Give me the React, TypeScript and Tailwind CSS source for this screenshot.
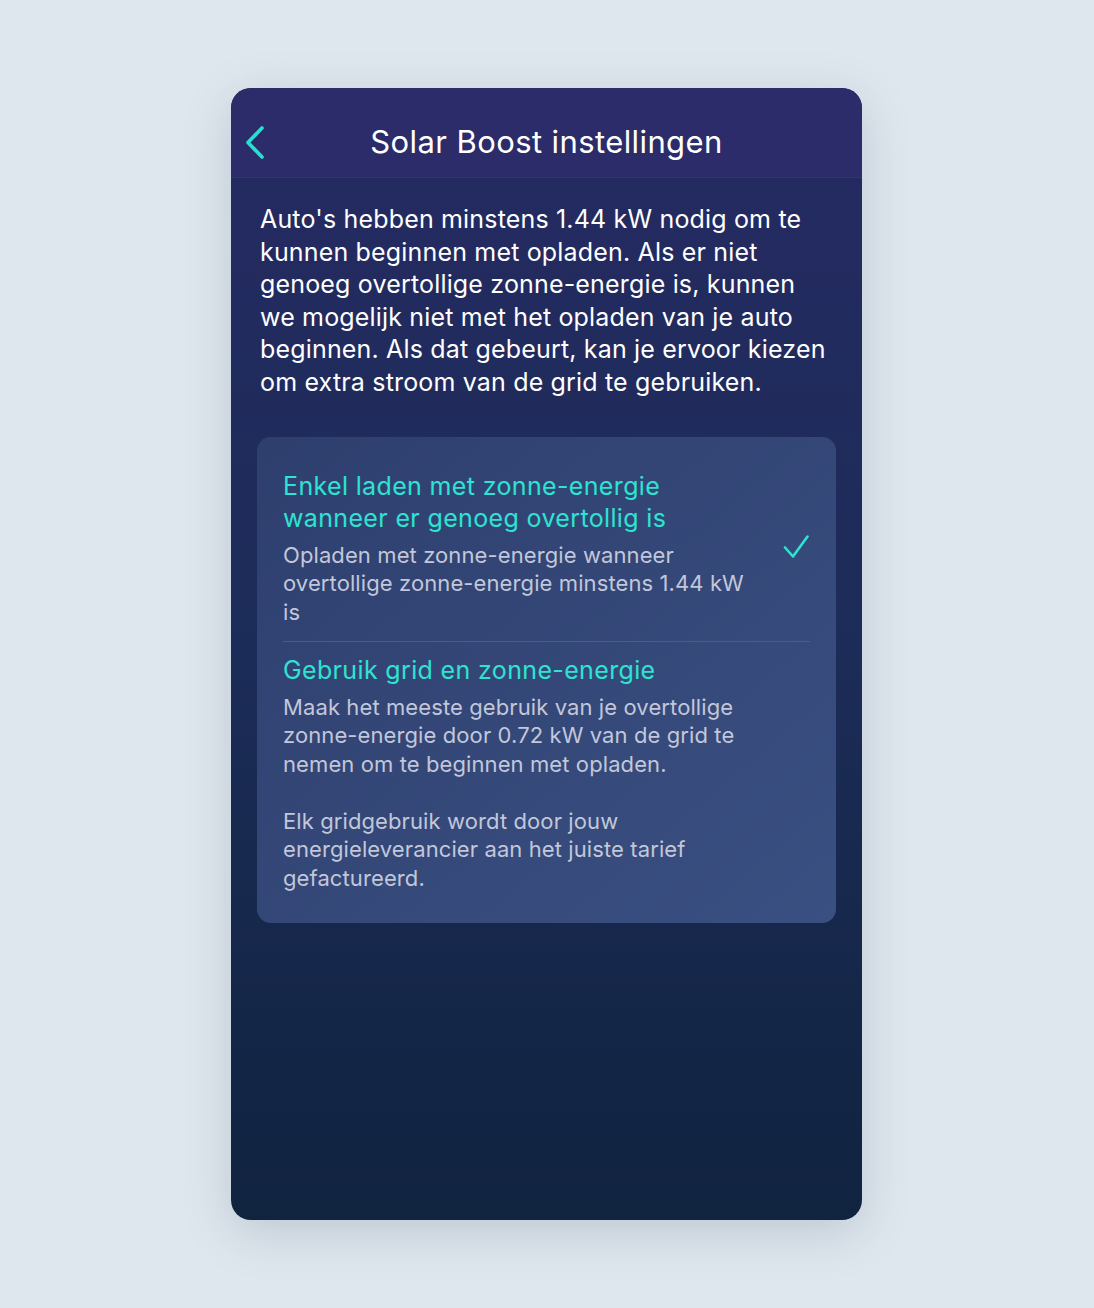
import React from 'react';

// Option row inside the settings card
interface OptionProps {
  title: React.ReactNode;
  selected?: boolean;
  children: React.ReactNode;
}

const Option = ({ title, selected, children }: OptionProps) => (
  <div className="flex items-center">
    <div className="w-[490px]">
      <p className="text-[25px] leading-[32.5px] text-[#2ee3d2] tracking-[0.35px]">{title}</p>
      <div className="mt-[6px] text-[22px] leading-[28.5px] text-[#c2c7da] tracking-[0.1px]">{children}</div>
    </div>
    {selected && (
      <svg className="ml-auto mr-[-2px] mt-[4px] h-[30px] w-[30px]" viewBox="0 0 30 30" fill="none">
        <path
          d="M3 12.5 L11 21.5 L25.5 1.5"
          stroke="#2ee3d2"
          strokeWidth="2.6"
          strokeLinecap="round"
          strokeLinejoin="round"
        />
      </svg>
    )}
  </div>
);

export default function App() {
  return (
    <div
      className="min-h-[1308px] bg-[#dfe7ee] pt-[88px]"
      style={{ fontFamily: 'Inter, "Noto Sans", sans-serif' }}
    >
      <div className="ml-[231px] flex h-[1132px] w-[631px] flex-col overflow-hidden rounded-[20px] bg-gradient-to-b from-[#252a62] via-[#1c2c58] to-[#10233f] shadow-[0_12px_50px_rgba(40,60,90,0.18)]">
        {/* Header */}
        <div className="grid h-[90px] shrink-0 grid-cols-[60px_1fr_60px] items-center border-b border-[#313378] bg-[#2b2c69] pt-[18px]">
          <button className="flex h-full items-center pl-[14px]">
            <svg width="22" height="34" viewBox="0 0 22 34" fill="none">
              <path
                d="M17 3 L3 17.5 L17 32"
                stroke="#22e3d3"
                strokeWidth="3.6"
                strokeLinecap="round"
                strokeLinejoin="round"
              />
            </svg>
          </button>
          <h1 className="text-center text-[31px] leading-none text-white tracking-[0.4px]">
            Solar Boost instellingen
          </h1>
          <div />
        </div>

        {/* Body */}
        <div className="px-[26px] pt-[25px]">
          <p className="pl-[3px] text-[25px] leading-[32.6px] text-white tracking-[0.17px]">
            Auto's hebben minstens 1.44 kW nodig om te
            <br />
            kunnen beginnen met opladen. Als er niet
            <br />
            genoeg overtollige zonne-energie is, kunnen
            <br />
            we mogelijk niet met het opladen van je auto
            <br />
            beginnen. Als dat gebeurt, kan je ervoor kiezen
            <br />
            om extra stroom van de grid te gebruiken.
          </p>

          <div className="mt-[38px] rounded-[14px] bg-gradient-to-br from-[#2e3f6e] to-[#3a5082] px-[26px] pb-[31px] pt-[33px]">
            <Option
              selected
              title={
                <>
                  Enkel laden met zonne-energie
                  <br />
                  wanneer er genoeg overtollig is
                </>
              }
            >
              Opladen met zonne-energie wanneer
              <br />
              overtollige zonne-energie minstens 1.44 kW
              <br />
              is
            </Option>

            <div className="mb-[12px] mt-[15px] h-px bg-[#4a5c88]" />

            <Option title="Gebruik grid en zonne-energie">
              <p>
                Maak het meeste gebruik van je overtollige
                <br />
                zonne-energie door 0.72 kW van de grid te
                <br />
                nemen om te beginnen met opladen.
              </p>
              <p className="mt-[28.5px]">
                Elk gridgebruik wordt door jouw
                <br />
                energieleverancier aan het juiste tarief
                <br />
                gefactureerd.
              </p>
            </Option>
          </div>
        </div>
      </div>
    </div>
  );
}
